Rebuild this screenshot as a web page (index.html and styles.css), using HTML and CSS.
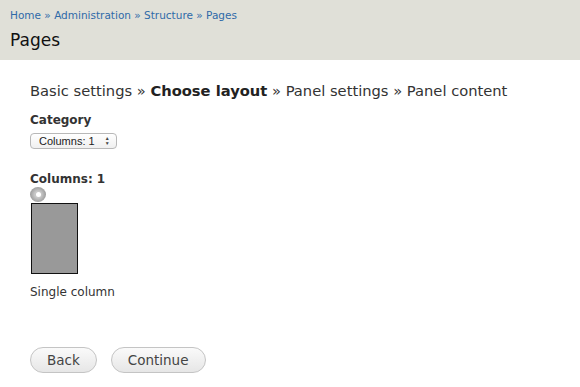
FILE: index.html
```html
<!DOCTYPE html>
<html lang="en">
<head>
  <meta charset="UTF-8" />
  <title>Pages</title>
  <link rel="stylesheet" href="styles.css">
</head>
<body>
  <div class="header">
    <div class="breadcrumb">
      <a href="#">Home</a> » <a href="#">Administration</a> » <a href="#">Structure</a> » <a href="#">Pages</a>
    </div>
    <h1 class="page-title">Pages</h1>
  </div>

  <div class="content">
    <div class="steps">Basic settings » <strong>Choose layout</strong> » Panel settings » Panel content</div>

    <div class="form-item">
      <label class="label">Category</label>
      <div class="select">Columns: 1 <span class="arrows">&#9650;<br>&#9660;</span></div>
    </div>

    <div class="form-item layouts">
      <label class="label">Columns: 1</label>
      <div class="layout-option">
        <span class="radio"><span class="dot"></span></span>
        <div class="preview"></div>
        <div class="caption">Single column</div>
      </div>
    </div>

    <div class="actions">
      <button class="button">Back</button>
      <button class="button">Continue</button>
    </div>
  </div>
</body>
</html>
```

FILE: styles.css
```css
* {
  margin: 0;
  padding: 0;
  box-sizing: border-box;
}
body {
  font-family: "DejaVu Sans", Verdana, sans-serif;
  color: #222;
  background: #fff;
}
a {
  color: #2f6aa8;
  text-decoration: none;
}
.header {
  background: #e0e0d8;
  height: 60px;
  padding: 8px 10px 0;
}
.breadcrumb {
  font-size: 10.5px;
  line-height: 14px;
  color: #2f6aa8;
}
.page-title {
  font-size: 17px;
  font-weight: normal;
  color: #111;
  margin-top: 8px;
  line-height: 20px;
}
.content {
  padding: 21px 30px 0;
}
.steps {
  font-size: 14.7px;
  line-height: 20px;
  color: #333;
}
.steps strong {
  color: #222;
}
.form-item {
  margin-top: 12px;
}
.label {
  display: block;
  font-size: 12px;
  font-weight: bold;
  line-height: 15px;
  color: #333;
}
.select {
  display: inline-flex;
  align-items: center;
  gap: 10px;
  margin-top: 5px;
  height: 16px;
  width: 87px;
  padding: 0 6px 0 8px;
  border: 1px solid #b8b8b8;
  border-radius: 4px;
  background: linear-gradient(#fff, #f0f0f0);
  font-family: "Liberation Sans", Arial, sans-serif;
  font-size: 11px;
  color: #222;
}
.arrows {
  font-size: 5px;
  line-height: 5px;
  color: #444;
}
.layouts {
  margin-top: 23px;
}
.radio {
  display: flex;
  align-items: center;
  justify-content: center;
  width: 16px;
  height: 15px;
  border-radius: 50%;
  background: radial-gradient(circle, #c8c8c8 30%, #9a9a9a 75%, #bbb 100%);
}
.dot {
  width: 5px;
  height: 5px;
  border-radius: 50%;
  background: #fff;
}
.preview {
  width: 47px;
  height: 71px;
  margin: 1px 0 0 1px;
  background: #999;
  border: 1px solid #111;
}
.caption {
  font-size: 12px;
  line-height: 15px;
  margin-top: 11px;
  color: #333;
}
.actions {
  display: flex;
  gap: 14px;
  margin-top: 47px;
}
.button {
  height: 26px;
  padding: 0 16px;
  border: 1px solid #c4c4c4;
  border-radius: 13px;
  background: linear-gradient(#fafafa, #e6e6e6);
  font-family: "DejaVu Sans", Verdana, sans-serif;
  font-size: 13.5px;
  color: #444;
}
```
